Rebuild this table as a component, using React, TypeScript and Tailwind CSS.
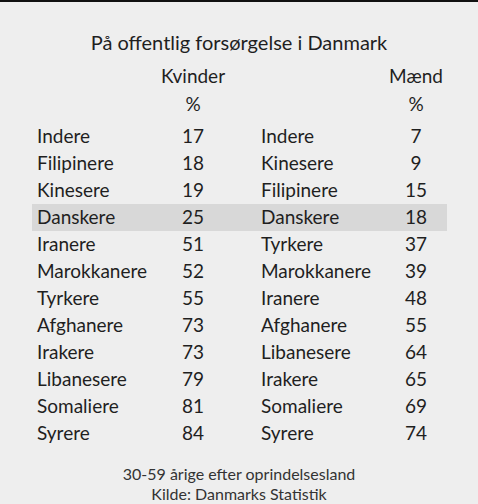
const women = [
  ["Indere", 17],
  ["Filipinere", 18],
  ["Kinesere", 19],
  ["Danskere", 25],
  ["Iranere", 51],
  ["Marokkanere", 52],
  ["Tyrkere", 55],
  ["Afghanere", 73],
  ["Irakere", 73],
  ["Libanesere", 79],
  ["Somaliere", 81],
  ["Syrere", 84],
] as const

const men = [
  ["Indere", 7],
  ["Kinesere", 9],
  ["Filipinere", 15],
  ["Danskere", 18],
  ["Tyrkere", 37],
  ["Marokkanere", 39],
  ["Iranere", 48],
  ["Afghanere", 55],
  ["Libanesere", 64],
  ["Irakere", 65],
  ["Somaliere", 69],
  ["Syrere", 74],
] as const

export default function App() {
  return (
    <div className="w-[478px] h-[504px] bg-[#eeeeee] border-t-2 border-[#111] text-[#1f1f1f] font-['Lato','Noto_Sans',sans-serif] overflow-hidden">
      <h1 className="pt-[27px] text-center text-[20px] leading-[26px]">
        På offentlig forsørgelse i Danmark
      </h1>

      <div className="flex mt-[9px] text-[19px] leading-[24px]">
        <div className="ml-[153px] w-[80px] text-center">Kvinder</div>
        <div className="ml-[143px] w-[80px] text-center">Mænd</div>
      </div>
      <div className="flex mt-[4px] text-[19px] leading-[24px]">
        <div className="ml-[153px] w-[80px] text-center">%</div>
        <div className="ml-[143px] w-[80px] text-center">%</div>
      </div>

      <div className="mt-[7px] ml-[32px] w-[415px] text-[19px]">
        {women.map(([wName, wVal], i) => {
          const [mName, mVal] = men[i]
          return (
            <div
              key={i}
              className={`flex h-[27px] items-center pl-[5px] ${i === 3 ? "bg-[#d8d8d8]" : ""}`}
            >
              <div className="w-[136px]">{wName}</div>
              <div className="w-[40px] text-center">{wVal}</div>
              <div className="w-[48px]" />
              <div className="w-[130px]">{mName}</div>
              <div className="w-[50px] text-center">{mVal}</div>
            </div>
          )
        })}
      </div>

      <div className="mt-[17px] text-center text-[16px] leading-[20px] text-[#333]">
        <p>30-59 årige efter oprindelsesland</p>
        <p>Kilde: Danmarks Statistik</p>
      </div>
    </div>
  )
}
